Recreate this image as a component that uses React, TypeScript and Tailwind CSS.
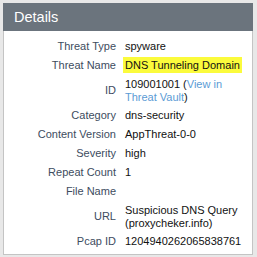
type Row = {
  label: string;
  value: React.ReactNode;
};

const rows: Row[] = [
  { label: "Threat Type", value: "spyware" },
  {
    label: "Threat Name",
    value: (
      <span className="bg-[#fbfb3c] -ml-[2px] px-[2px] py-[2px]">DNS Tunneling Domain</span>
    ),
  },
  {
    label: "ID",
    value: (
      <>
        <div>
          109001001 (<span className="text-[#5b9bd5]">View in</span>
        </div>
        <div>
          <span className="text-[#5b9bd5]">Threat Vault</span>)
        </div>
      </>
    ),
  },
  { label: "Category", value: "dns-security" },
  { label: "Content Version", value: "AppThreat-0-0" },
  { label: "Severity", value: "high" },
  { label: "Repeat Count", value: "1" },
  { label: "File Name", value: "" },
  { label: "URL", value: "Suspicious DNS Query (proxycheker.info)" },
  { label: "Pcap ID", value: "1204940262065838761" },
];

export default function App() {
  return (
    <div className="w-[257px] h-[257px] bg-[#e8e8e8] p-[3px] pr-[4px] pb-[2px] font-['Liberation_Sans',Arial,sans-serif]">
      <div className="h-full flex flex-col border border-[#c4c4c4] bg-white">
        {/* Header */}
        <div className="h-[28px] -mx-px -mt-px bg-[#6b747d] flex items-center px-[11px] shrink-0">
          <span className="text-white text-[14.5px] leading-none">Details</span>
        </div>

        {/* Rows */}
        <div className="flex flex-col pt-[6px] text-[11px] leading-[13px]">
          {rows.map((row) => (
            <div key={row.label} className="flex items-center min-h-[19px] py-[2.5px]">
              <div className="w-[112px] shrink-0 text-right text-[#3d4c5e]">{row.label}</div>
              <div className="pl-[9px] pr-[6px] flex-1 text-[#111]">{row.value}</div>
            </div>
          ))}
        </div>
      </div>
    </div>
  );
}
